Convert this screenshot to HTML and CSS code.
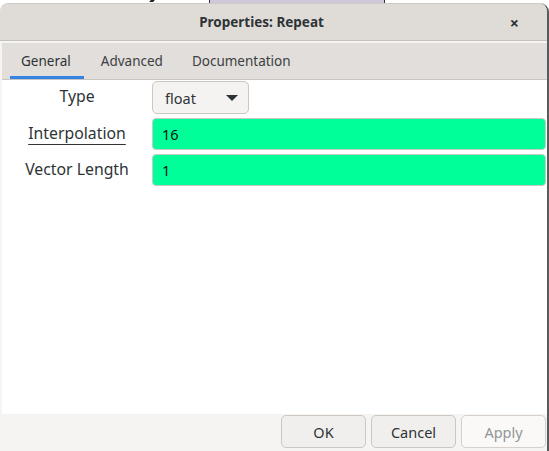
FILE: index.html
```html
<!DOCTYPE html>
<html>
<head>
<meta charset="utf-8">
<link rel="stylesheet" href="styles.css">
</head>
<body>
<div class="behind">
  <span class="behind-mark"></span>
  <span class="behind-box"></span>
</div>
<div class="dialog">
  <div class="titlebar">
    <span class="title">Properties: Repeat</span>
    <span class="close">×</span>
  </div>
  <div class="body">
    <div class="notebook">
      <div class="tabs">
        <div class="tab active">General</div>
        <div class="tab">Advanced</div>
        <div class="tab">Documentation</div>
      </div>
      <div class="page">
        <div class="row">
          <div class="label">Type</div>
          <div class="combo"><span>float</span><span class="arrow"></span></div>
        </div>
        <div class="row">
          <div class="label"><span class="ul">Interpolation</span></div>
          <div class="entry">16</div>
        </div>
        <div class="row">
          <div class="label">Vector Length</div>
          <div class="entry">1</div>
        </div>
      </div>
    </div>
    <div class="actions">
      <div class="btn">OK</div>
      <div class="btn">Cancel</div>
      <div class="btn disabled">Apply</div>
    </div>
  </div>
</div>
</body>
</html>
```

FILE: styles.css
```css
html, body {
  margin: 0;
  padding: 0;
  background: #ffffff;
  width: 549px;
  height: 451px;
  overflow: hidden;
  font-family: "Noto Sans", "Open Sans", sans-serif;
  font-size: 14px;
  color: #2e3436;
}

.behind {
  height: 3px;
  position: relative;
}
.behind-mark {
  position: absolute;
  left: 150px;
  top: 0;
  width: 4px;
  height: 2px;
  background: #222;
  transform: skewX(-40deg);
}
.behind-box {
  position: absolute;
  left: 209px;
  top: 0;
  width: 174px;
  height: 3px;
  background: #cfc8da;
  border-left: 1px solid #333;
  border-right: 1px solid #333;
}

.dialog {
  width: 547px;
  height: 448px;
  border-right: 2px solid #5a5a5a;
  border-top-right-radius: 9px;
  border-top-left-radius: 8px;
  display: flex;
  flex-direction: column;
  background: #f6f5f4;
  overflow: hidden;
}

.titlebar {
  height: 36px;
  flex: none;
  background: #dfdcd8;
  border-bottom: 1px solid #c5c1bd;
  border-top: 1px solid #cfccc8;
  border-top-left-radius: 8px;
  border-top-right-radius: 8px;
  display: flex;
  align-items: center;
  justify-content: center;
  position: relative;
}
.title {
  font-weight: bold;
  font-size: 13.5px;
  color: #2e3436;
  margin-right: 24px;
}
.close {
  position: absolute;
  right: 28px;
  top: 8px;
  font-weight: bold;
  font-size: 16px;
  color: #2e3436;
}

.body {
  flex: 1;
  display: flex;
  flex-direction: column;
  padding: 2px 0 0 2px;
}

.notebook {
  flex: 1;
  display: flex;
  flex-direction: column;
}

.tabs {
  height: 36px;
  flex: none;
  background: #e1dedb;
  border-bottom: 1px solid #c9c5c1;
  display: flex;
  padding-left: 8px;
  font-size: 13.5px;
}
.tab {
  padding: 0 12px;
  display: flex;
  align-items: center;
  color: #3c3f41;
  margin-right: 5px;
  box-sizing: border-box;
  border-bottom: 3px solid transparent;
  padding-top: 3px;
}
.tab:first-child {
  padding: 3px 13px 0 11px;
}
.tab.active {
  border-bottom-color: #3584e4;
  color: #2e3436;
}

.page {
  flex: 1;
  background: #ffffff;
  display: flex;
  flex-direction: column;
  gap: 4px;
  padding-top: 1px;
}

.row {
  display: flex;
  align-items: stretch;
}
.label {
  width: 150px;
  flex: none;
  display: flex;
  align-items: center;
  justify-content: center;
  font-size: 15.8px;
  color: #2e3436;
  padding-bottom: 3px;
  box-sizing: border-box;
}
.ul {
  text-decoration: underline;
  text-underline-offset: 5px;
  text-decoration-thickness: 1px;
}

.combo {
  width: 97px;
  height: 33px;
  box-sizing: border-box;
  border: 1px solid #cdc7c2;
  border-radius: 5px;
  background: #f4f3f2;
  display: flex;
  align-items: center;
  justify-content: space-between;
  padding: 0 10px 0 12px;
  font-size: 14.5px;
  color: #2e3436;
}
.arrow {
  width: 0;
  height: 0;
  border-left: 6px solid transparent;
  border-right: 6px solid transparent;
  border-top: 6px solid #2e3436;
  margin-top: 1px;
}

.entry {
  width: 394px;
  height: 32px;
  box-sizing: border-box;
  border: 1px solid #c8c8c4;
  border-radius: 4px;
  background: #00ff99;
  display: flex;
  align-items: center;
  padding-left: 9px;
  font-size: 14.5px;
  color: #111;
}

.actions {
  height: 36px;
  flex: none;
  display: flex;
  justify-content: flex-end;
  align-items: flex-start;
  gap: 5px;
  padding-right: 1px;
  padding-top: 1px;
  background: #f5f4f2;
  margin-left: -2px;
}
.btn {
  width: 85px;
  height: 33px;
  box-sizing: border-box;
  border: 1px solid #cdc7c2;
  border-radius: 5px;
  background: #f1efed;
  display: flex;
  align-items: center;
  justify-content: center;
  font-size: 14.5px;
  color: #2e3436;
}
.btn.disabled {
  background: #faf9f8;
  color: #929595;
  border-color: #d5d0cc;
}
```
